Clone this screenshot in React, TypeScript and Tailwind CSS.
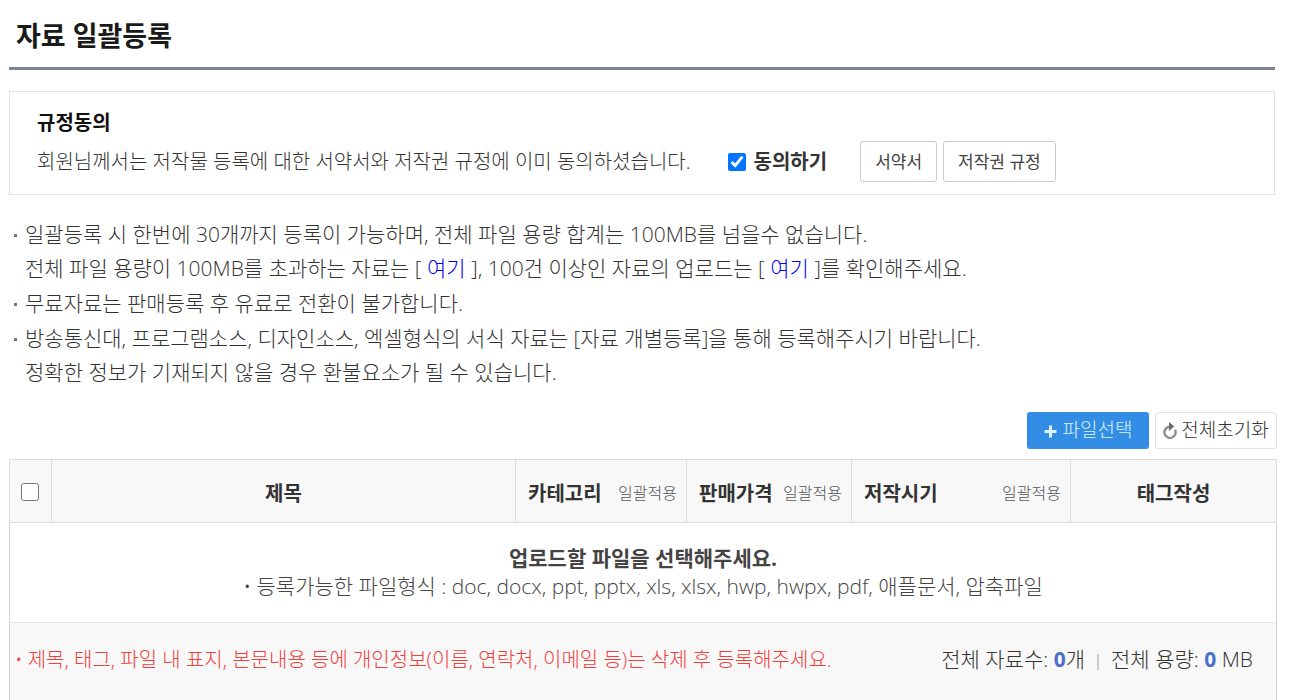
import { useState } from "react";

const uploadNotices = [
  {
    id: "limit",
    body: (
      <>
        일괄등록 시 한번에 30개까지 등록이 가능하며, 전체 파일 용량 합계는 100MB를 넘을수 없습니다.
        <br />
        전체 파일 용량이 100MB를 초과하는 자료는 [ <NoticeLink /> ], 100건 이상인 자료의 업로드는 [ <NoticeLink /> ]를 확인해주세요.
      </>
    ),
  },
  { id: "free", body: "무료자료는 판매등록 후 유료로 전환이 불가합니다." },
  {
    id: "format",
    body: (
      <>
        방송통신대, 프로그램소스, 디자인소스, 엑셀형식의 서식 자료는 [자료 개별등록]을 통해 등록해주시기 바랍니다.
        <br />
        정확한 정보가 기재되지 않을 경우 환불요소가 될 수 있습니다.
      </>
    ),
  },
];

function NoticeLink() {
  return (
    <a href="#guide" className="text-[#0000ee]">
      여기
    </a>
  );
}

function PlusIcon() {
  return (
    <svg width="13" height="13" viewBox="0 0 13 13" fill="currentColor" className="mt-[2px]" aria-hidden="true">
      <path d="M5 0.500h3v4.500h4.500v3H8v4.500H5V8H0.500V5H5z" />
    </svg>
  );
}

function ResetIcon() {
  return (
    <svg width="14" height="18" viewBox="0 0 14 18" aria-hidden="true">
      <path d="M7 4.700A5.600 5.600 0 1 0 12 7.800" fill="none" stroke="#8f8f8f" strokeWidth="2.400" />
      <path d="M6 0L11.200 4.600L6 9z" fill="#6a6a6a" />
    </svg>
  );
}

function ApplyAllButton() {
  return (
    <button type="button" className="pb-[3px] text-[16px] font-light text-[#555]">
      일괄적용
    </button>
  );
}

function ApplyAllHeader({ label }: { label: string }) {
  return (
    <th className="border border-[#dcdcdc] pl-3 pr-[9px] pt-[6px] font-bold">
      <div className="flex items-center justify-between whitespace-nowrap">
        {label}
        <ApplyAllButton />
      </div>
    </th>
  );
}

export default function App() {
  const [agreed, setAgreed] = useState(true);
  const [allSelected, setAllSelected] = useState(false);

  return (
    <main className="bg-white pl-[9px] pr-[14px] font-['Open_Sans','Noto_Sans_CJK_KR',sans-serif] text-[#333]">
      <h1 className="mr-[2px] border-b-3 border-[#7d8493] pb-[11px] pl-[7px] pt-4 text-[27px] font-bold leading-[40px] text-[#1a1a1a]">
        자료 일괄등록
      </h1>

      {/* Agreement */}
      <section className="mr-[2px] mt-[21px] border border-[#e3e3e3] pb-3 pl-[27px] pt-4 text-[20px]">
        <h2 className="font-bold leading-[30px] text-[#111]">규정동의</h2>
        <div className="flex items-center whitespace-nowrap pt-[3px]">
          <p className="font-light">회원님께서는 저작물 등록에 대한 서약서와 저작권 규정에 이미 동의하셨습니다.</p>
          <label className="ml-[37px] flex items-center gap-2 font-bold">
            <input
              type="checkbox"
              checked={agreed}
              onChange={(e) => setAgreed(e.target.checked)}
              className="size-[18px]"
            />
            동의하기
          </label>
          <div className="ml-[33px] flex gap-[6px] text-[17px] text-[#444]">
            <button type="button" className="h-[41px] rounded-[3px] border border-[#ccc] px-[14px]">
              서약서
            </button>
            <button type="button" className="h-[41px] rounded-[3px] border border-[#ccc] px-[14px]">
              저작권 규정
            </button>
          </div>
        </div>
      </section>

      {/* Upload rules */}
      <ul className="mt-[22px] space-y-px pl-[5px] text-[21px] font-light leading-[34px]">
        {uploadNotices.map((notice) => (
          <li key={notice.id} className="flex gap-2">
            <span className="mt-[17px] size-[3px] shrink-0 bg-[#777]" />
            <p>{notice.body}</p>
          </li>
        ))}
      </ul>

      <div className="mt-[23px] flex justify-end gap-[6px] text-[19px] font-light">
        <button type="button" className="flex h-[37px] w-[122px] items-center justify-center gap-[6px] rounded-[3px] bg-[#338de4] text-[#d9f3ff]">
          <PlusIcon />
          파일선택
        </button>
        <button type="button" className="flex h-[37px] w-[122px] items-center justify-center gap-1 rounded-[3px] border border-[#dfe3e8]">
          <ResetIcon />
          전체초기화
        </button>
      </div>

      {/* File list */}
      <table className="mt-[10px] w-full table-fixed border-collapse border border-b-0 border-[#d0d0d0]">
        <colgroup>
          <col className="w-[42px]" />
          <col />
          <col className="w-[171px]" />
          <col className="w-[165px]" />
          <col className="w-[219px]" />
          <col className="w-[206px]" />
        </colgroup>
        <thead className="bg-[#f8f8f8] text-[20px]">
          <tr className="h-[63px]">
            <th className="border border-[#dcdcdc] pr-[2px] pt-[2px]">
              <input
                type="checkbox"
                aria-label="전체 선택"
                checked={allSelected}
                onChange={(e) => setAllSelected(e.target.checked)}
                className="mx-auto block size-[18px]"
              />
            </th>
            <th className="border border-[#dcdcdc] pt-[6px] font-bold">제목</th>
            <ApplyAllHeader label="카테고리" />
            <ApplyAllHeader label="판매가격" />
            <ApplyAllHeader label="저작시기" />
            <th className="border border-[#dcdcdc] pt-[6px] font-bold">태그작성</th>
          </tr>
        </thead>
        <tbody>
          <tr className="h-[100px]">
            <td colSpan={6} className="border-b border-[#e3e3e3] pb-[2px] text-center text-[21px] leading-[28px] text-[#444]">
              <strong className="block font-bold">업로드할 파일을 선택해주세요.</strong>
              <p className="font-light">• 등록가능한 파일형식 : doc, docx, ppt, pptx, xls, xlsx, hwp, hwpx, pdf, 애플문서, 압축파일</p>
            </td>
          </tr>
        </tbody>
        <tfoot className="bg-[#f8f8f8] font-light">
          <tr className="h-[78px]">
            <td colSpan={6} className="pb-1 pl-[5px] pr-[23px]">
              <div className="flex items-center justify-between whitespace-nowrap">
                <p className="text-[20px] text-[#f0403c]">• 제목, 태그, 파일 내 표지, 본문내용 등에 개인정보(이름, 연락처, 이메일 등)는 삭제 후 등록해주세요.</p>
                <p className="flex items-center text-[21px]">
                  <span>전체 자료수: <strong className="font-bold text-[#4a6fc4]">0</strong>개</span>
                  <span className="mx-3 mt-1 h-4 w-[2px] bg-[#ccc]" />
                  <span>전체 용량: <strong className="font-bold text-[#4a6fc4]">0</strong> MB</span>
                </p>
              </div>
            </td>
          </tr>
        </tfoot>
      </table>
    </main>
  );
}
